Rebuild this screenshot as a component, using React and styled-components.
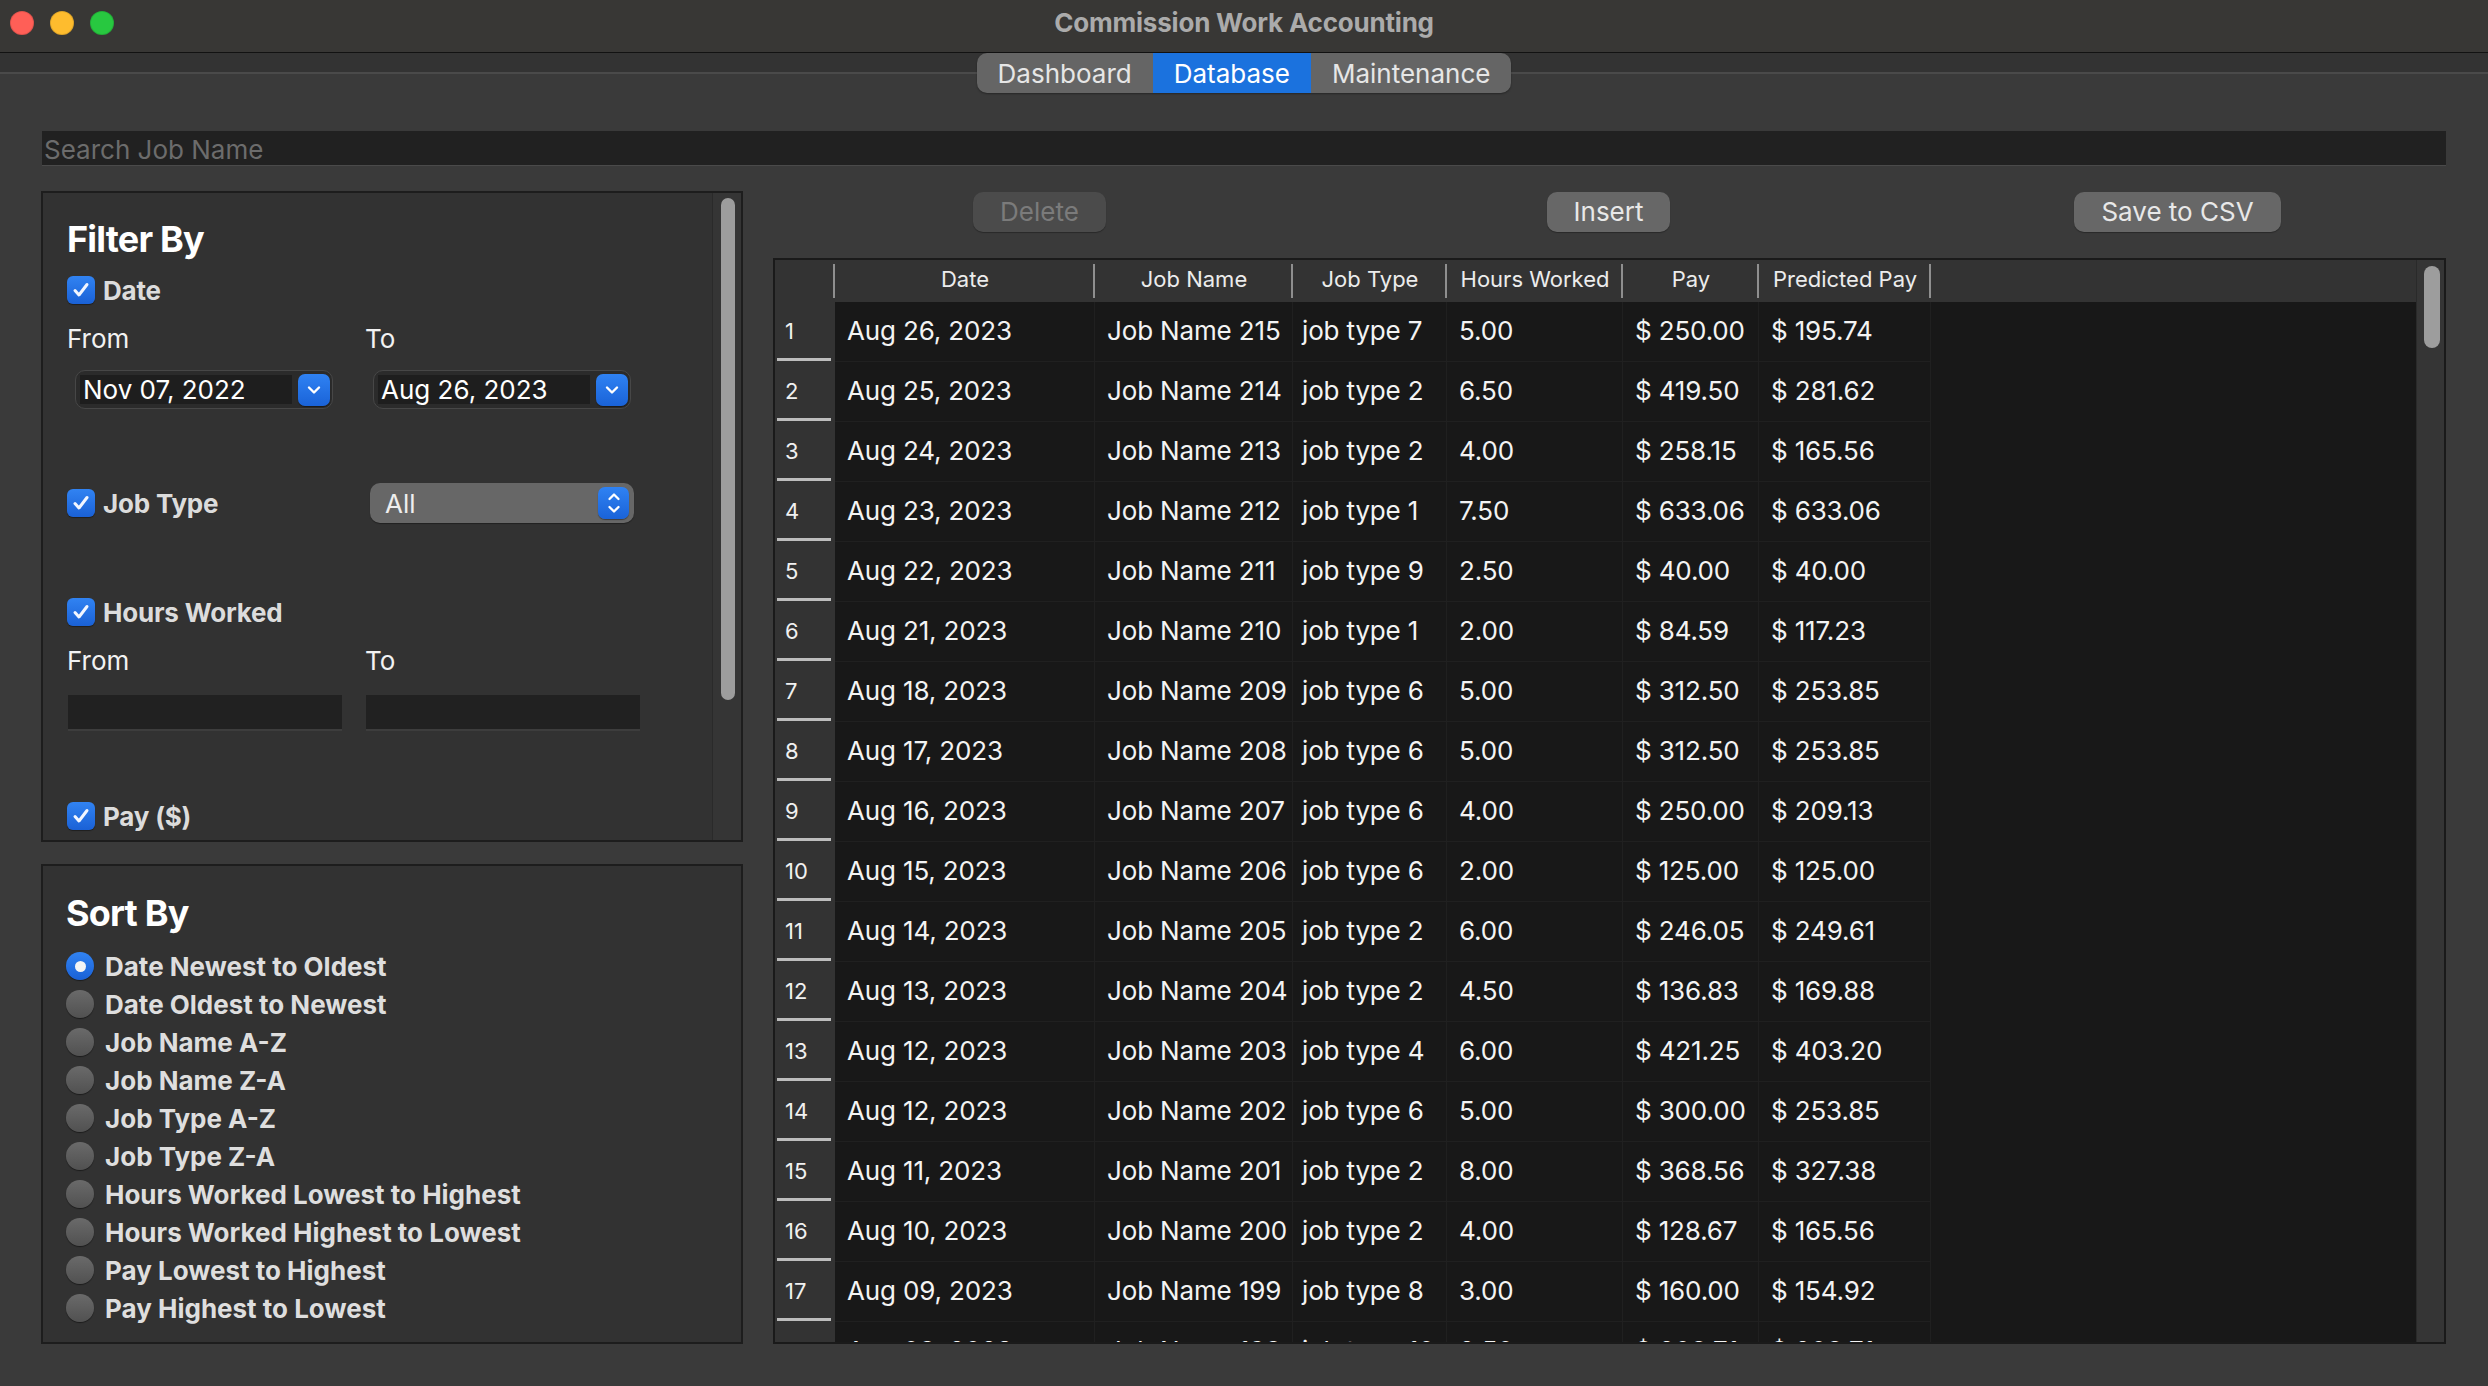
import React from "react";
import styled, { createGlobalStyle, css } from "styled-components";

const GlobalStyle = createGlobalStyle`
  html, body { margin: 0; padding: 0; background: #3a3a3a; }
  body { font-family: Inter, "Liberation Sans", sans-serif; -webkit-font-smoothing: antialiased; }
  * { box-sizing: border-box; }
`;

const Window = styled.div`
  width: 2488px;
  height: 1386px;
  display: flex;
  flex-direction: column;
  background: #3a3a3a;
  overflow: hidden;
`;

const TitleBar = styled.header`
  height: 53px;
  flex: none;
  display: grid;
  grid-template-columns: 1fr auto 1fr;
  align-items: start;
  background: #383735;
  border-bottom: 1px solid #121212;
`;

const Lights = styled.div`
  display: flex;
  gap: 16px;
  padding: 11px 0 0 10px;
`;

const Light = styled.span`
  width: 24px;
  height: 24px;
  border-radius: 50%;
  background: ${(p) => p.$color};
  box-shadow: inset 0 0 0 1px rgba(0, 0, 0, 0.12);
`;

const Title = styled.h1`
  margin: 0;
  padding-top: 10px;
  font-size: 26px;
  line-height: 26px;
  font-weight: 700;
  color: #ababab;
  letter-spacing: -0.2px;
`;

const TabStrip = styled.nav`
  height: 40px;
  flex: none;
  display: flex;
  justify-content: center;
  background: linear-gradient(
    #333333 0 19px,
    #4a4a4a 19px 21px,
    #3a3a3a 21px
  );
`;

const Segmented = styled.div`
  display: flex;
  height: 40px;
  border-radius: 10px;
  overflow: hidden;
  background: #656565;
  box-shadow: 0 1px 2px rgba(0, 0, 0, 0.35);
`;

const Segment = styled.div`
  padding: 0 21px;
  font-size: 26px;
  line-height: 41px;
  color: #e6e6e6;
  ${(p) =>
    p.$active &&
    css`
      background: #1b72de;
      color: #ffffff;
    `}
`;

const Content = styled.main`
  flex: 1;
  min-height: 0;
  display: flex;
  flex-direction: column;
  padding: 38px 42px 42px 41px;
`;

const SearchField = styled.input`
  height: 35px;
  flex: none;
  margin-left: 1px;
  border: none;
  border-bottom: 1px solid #4a4a4a;
  background: #212121;
  color: #eee;
  font-family: inherit;
  font-size: 26px;
  padding: 3px 2px 0;
  outline: none;
  &::placeholder {
    color: #6c6c6c;
  }
`;

const Main = styled.div`
  flex: 1;
  min-height: 0;
  margin-top: 25px;
  display: grid;
  grid-template-columns: 702px 1fr;
  gap: 30px;
`;

const LeftColumn = styled.div`
  display: flex;
  flex-direction: column;
  gap: 22px;
  min-height: 0;
`;

const Panel = styled.section`
  background: #323232;
  border: 2px solid #1d1d1d;
  display: flex;
  min-height: 0;
`;

const FilterPanel = styled(Panel)`
  height: 651px;
  flex: none;
`;

const SortPanel = styled(Panel)`
  flex: 1;
  flex-direction: column;
  padding: 28px 0 0 23px;
`;

const FilterBody = styled.div`
  flex: 1;
  overflow: hidden;
  padding: 27px 0 0 24px;
`;

const Heading = styled.h2`
  margin: 0;
  font-size: 36px;
  line-height: 38px;
  font-weight: 700;
  letter-spacing: -0.8px;
  color: #ffffff;
`;

const CheckRow = styled.label`
  display: flex;
  align-items: center;
  gap: 8px;
  height: 28px;
  margin-top: ${(p) => p.$mt || 0}px;
  font-size: 26px;
  font-weight: 650;
  color: #dcdcdc;
  letter-spacing: -0.2px;
`;

const CheckBox = styled.span`
  width: 28px;
  height: 28px;
  border-radius: 6px;
  background: linear-gradient(#3183f2, #1a61d6);
  box-shadow: 0 1px 1px rgba(0, 0, 0, 0.4);
  display: flex;
  align-items: center;
  justify-content: center;
`;

const TwoCol = styled.div`
  display: grid;
  grid-template-columns: 298px 298px;
  align-items: center;
  margin-top: ${(p) => p.$mt || 0}px;
`;

const FieldLabel = styled.span`
  font-size: 26px;
  line-height: 26px;
  color: #f2f2f2;
`;

const DatePicker = styled.div`
  margin-left: 8px;
  width: 258px;
  height: 39px;
  display: flex;
  align-items: center;
  gap: 6px;
  padding: 0 2px 0 4px;
  background: #2b2b2b;
  border: 1px solid #474747;
  border-radius: 10px;
`;

const DateText = styled.span`
  flex: 1;
  height: 29px;
  background: #1e1e1e;
  font-size: 26px;
  line-height: 29px;
  color: #ffffff;
  padding-left: 3px;
`;

const BlueStep = styled.span`
  width: ${(p) => p.$w || 32}px;
  height: 32px;
  flex: none;
  border-radius: 7px;
  background: linear-gradient(#2f82f3, #1a63d8);
  box-shadow: 0 1px 1px rgba(0, 0, 0, 0.4);
  display: flex;
  align-items: center;
  justify-content: center;
`;

const Popup = styled.div`
  margin-left: 5px;
  width: 264px;
  height: 40px;
  display: flex;
  align-items: center;
  justify-content: space-between;
  padding: 0 5px 0 15px;
  background: #676767;
  border-radius: 10px;
  box-shadow: 0 1px 1px rgba(0, 0, 0, 0.35);
  font-size: 26px;
  color: #eeeeee;
`;

const NumField = styled.div`
  margin-left: 1px;
  width: 274px;
  height: 36px;
  background: #212121;
  border-bottom: 2px solid #3d3d3d;
`;

const ScrollTrack = styled.div`
  width: ${(p) => p.$w}px;
  flex: none;
  background: #353535;
  border-left: 1px solid #2a2a2a;
  padding: ${(p) => p.$top}px 0 0 ${(p) => p.$left}px;
`;

const Thumb = styled.div`
  width: ${(p) => p.$w}px;
  height: ${(p) => p.$h}px;
  border-radius: ${(p) => p.$w / 2}px;
  background: #9d9d9d;
`;

const RadioList = styled.div`
  margin-top: 15px;
  display: flex;
  flex-direction: column;
`;

const RadioRow = styled.label`
  height: 38px;
  display: flex;
  align-items: center;
  gap: 11px;
  font-size: 26px;
  font-weight: 700;
  color: #dedede;
  letter-spacing: 0;
`;

const Radio = styled.span`
  width: 28px;
  height: 28px;
  border-radius: 50%;
  flex: none;
  display: flex;
  align-items: center;
  justify-content: center;
  box-shadow: 0 1px 1px rgba(0, 0, 0, 0.45);
  background: ${(p) =>
    p.$on
      ? "linear-gradient(#3183f2, #1a61d6)"
      : "linear-gradient(#6a6a6a, #515151)"};
  &::after {
    content: "";
    display: ${(p) => (p.$on ? "block" : "none")};
    width: 11px;
    height: 11px;
    border-radius: 50%;
    background: #f4f4f4;
  }
`;

const RightColumn = styled.div`
  display: flex;
  flex-direction: column;
  min-height: 0;
  min-width: 0;
`;

const ButtonRow = styled.div`
  height: 40px;
  flex: none;
  margin: 1px -16px 0 -18px;
  display: grid;
  grid-template-columns: repeat(3, 1fr);
  justify-items: center;
`;

const Button = styled.button`
  height: 40px;
  padding: 0 27px;
  border: none;
  border-radius: 10px;
  font-family: inherit;
  font-size: 26px;
  line-height: 38px;
  background: ${(p) => (p.disabled ? "#4b4b4b" : "#676767")};
  color: ${(p) => (p.disabled ? "#7b7b7b" : "#e8e8e8")};
  box-shadow: 0 1px 1px rgba(0, 0, 0, 0.3);
`;

const TableBox = styled.div`
  flex: 1;
  min-height: 0;
  margin-top: 26px;
  display: flex;
  border: 2px solid #1a1a1a;
  background: #181818;
`;

const TableMain = styled.div`
  flex: 1;
  min-width: 0;
  display: flex;
  flex-direction: column;
  overflow: hidden;
`;

const GRID = "60px 260px 198px 154px 176px 136px 172px 1fr";

const HeaderRow = styled.div`
  flex: none;
  height: 42px;
  display: grid;
  grid-template-columns: ${GRID};
  background: #333333;
`;

const HeaderCell = styled.div`
  text-align: center;
  font-size: 22px;
  line-height: 39px;
  color: #ececec;
  white-space: nowrap;
  background: ${(p) =>
    p.$sep
      ? "linear-gradient(#8f8f8f, #8f8f8f) no-repeat right center / 2px 34px"
      : "none"};
`;

const Body = styled.div`
  flex: 1;
  min-height: 0;
  overflow: hidden;
`;

const Row = styled.div`
  height: 60px;
  display: grid;
  grid-template-columns: ${GRID};
`;

const RowNum = styled.div`
  background: #333333
    linear-gradient(#bdbdbd, #bdbdbd) no-repeat left 2px bottom 1px / 54px 3px;
  font-size: 22px;
  line-height: 58px;
  padding-left: 10px;
  color: #f0f0f0;
`;

const Cell = styled.div`
  font-size: 26px;
  line-height: 57px;
  padding-left: ${(p) => p.$pad}px;
  color: #f3f3f3;
  letter-spacing: -0.15px;
  white-space: nowrap;
  overflow: hidden;
  border-right: 1px solid #202020;
  border-bottom: 1px solid #202020;
`;

const Filler = styled.div``;

const Check = () => (
  <CheckBox>
    <svg width="20" height="20" viewBox="0 0 20 20">
      <path
        d="M4 10.5 L8 15 L16 4.5"
        fill="none"
        stroke="#f2f6ff"
        strokeWidth="3"
        strokeLinecap="round"
        strokeLinejoin="round"
      />
    </svg>
  </CheckBox>
);

const ChevronDown = () => (
  <svg width="16" height="12" viewBox="0 0 16 12">
    <polyline
      points="3,3.5 8,8.5 13,3.5"
      fill="none"
      stroke="#fff"
      strokeWidth="2.4"
      strokeLinecap="round"
      strokeLinejoin="round"
    />
  </svg>
);

const UpDown = () => (
  <svg width="16" height="26" viewBox="0 0 16 26">
    <polyline
      points="3.5,9 8,4.5 12.5,9"
      fill="none"
      stroke="#fff"
      strokeWidth="2.3"
      strokeLinecap="round"
      strokeLinejoin="round"
    />
    <polyline
      points="3.5,17 8,21.5 12.5,17"
      fill="none"
      stroke="#fff"
      strokeWidth="2.3"
      strokeLinecap="round"
      strokeLinejoin="round"
    />
  </svg>
);

const columns = [
  { title: "Date", pad: 12 },
  { title: "Job Name", pad: 12 },
  { title: "Job Type", pad: 9 },
  { title: "Hours Worked", pad: 12 },
  { title: "Pay", pad: 12 },
  { title: "Predicted Pay", pad: 12 },
];

const rows = [
  ["Aug 26, 2023", "Job Name 215", "job type 7", "5.00", "$ 250.00", "$ 195.74"],
  ["Aug 25, 2023", "Job Name 214", "job type 2", "6.50", "$ 419.50", "$ 281.62"],
  ["Aug 24, 2023", "Job Name 213", "job type 2", "4.00", "$ 258.15", "$ 165.56"],
  ["Aug 23, 2023", "Job Name 212", "job type 1", "7.50", "$ 633.06", "$ 633.06"],
  ["Aug 22, 2023", "Job Name 211", "job type 9", "2.50", "$ 40.00", "$ 40.00"],
  ["Aug 21, 2023", "Job Name 210", "job type 1", "2.00", "$ 84.59", "$ 117.23"],
  ["Aug 18, 2023", "Job Name 209", "job type 6", "5.00", "$ 312.50", "$ 253.85"],
  ["Aug 17, 2023", "Job Name 208", "job type 6", "5.00", "$ 312.50", "$ 253.85"],
  ["Aug 16, 2023", "Job Name 207", "job type 6", "4.00", "$ 250.00", "$ 209.13"],
  ["Aug 15, 2023", "Job Name 206", "job type 6", "2.00", "$ 125.00", "$ 125.00"],
  ["Aug 14, 2023", "Job Name 205", "job type 2", "6.00", "$ 246.05", "$ 249.61"],
  ["Aug 13, 2023", "Job Name 204", "job type 2", "4.50", "$ 136.83", "$ 169.88"],
  ["Aug 12, 2023", "Job Name 203", "job type 4", "6.00", "$ 421.25", "$ 403.20"],
  ["Aug 12, 2023", "Job Name 202", "job type 6", "5.00", "$ 300.00", "$ 253.85"],
  ["Aug 11, 2023", "Job Name 201", "job type 2", "8.00", "$ 368.56", "$ 327.38"],
  ["Aug 10, 2023", "Job Name 200", "job type 2", "4.00", "$ 128.67", "$ 165.56"],
  ["Aug 09, 2023", "Job Name 199", "job type 8", "3.00", "$ 160.00", "$ 154.92"],
  ["Aug 08, 2023", "Job Name 198", "job type 10", "2.50", "$ 208.71", "$ 208.71"],
];

const sortOptions = [
  "Date Newest to Oldest",
  "Date Oldest to Newest",
  "Job Name A-Z",
  "Job Name Z-A",
  "Job Type A-Z",
  "Job Type Z-A",
  "Hours Worked Lowest to Highest",
  "Hours Worked Highest to Lowest",
  "Pay Lowest to Highest",
  "Pay Highest to Lowest",
];

export default function App() {
  return (
    <>
      <GlobalStyle />
      <Window>
        <TitleBar>
          <Lights>
            <Light $color="#ff5f57" />
            <Light $color="#febc2e" />
            <Light $color="#28c840" />
          </Lights>
          <Title>Commission Work Accounting</Title>
          <div />
        </TitleBar>
        <TabStrip>
          <Segmented>
            <Segment>Dashboard</Segment>
            <Segment $active>Database</Segment>
            <Segment>Maintenance</Segment>
          </Segmented>
        </TabStrip>
        <Content>
          <SearchField placeholder="Search Job Name" />
          <Main>
            <LeftColumn>
              <FilterPanel>
                <FilterBody>
                  <Heading>Filter By</Heading>
                  <CheckRow $mt={18}>
                    <Check />
                    Date
                  </CheckRow>
                  <TwoCol $mt={22}>
                    <FieldLabel>From</FieldLabel>
                    <FieldLabel>To</FieldLabel>
                  </TwoCol>
                  <TwoCol $mt={18}>
                    <DatePicker>
                      <DateText>Nov 07, 2022</DateText>
                      <BlueStep>
                        <ChevronDown />
                      </BlueStep>
                    </DatePicker>
                    <DatePicker>
                      <DateText>Aug 26, 2023</DateText>
                      <BlueStep>
                        <ChevronDown />
                      </BlueStep>
                    </DatePicker>
                  </TwoCol>
                  <TwoCol $mt={74}>
                    <CheckRow>
                      <Check />
                      Job Type
                    </CheckRow>
                    <Popup>
                      All
                      <BlueStep $w={31}>
                        <UpDown />
                      </BlueStep>
                    </Popup>
                  </TwoCol>
                  <CheckRow $mt={75}>
                    <Check />
                    Hours Worked
                  </CheckRow>
                  <TwoCol $mt={22}>
                    <FieldLabel>From</FieldLabel>
                    <FieldLabel>To</FieldLabel>
                  </TwoCol>
                  <TwoCol $mt={21}>
                    <NumField />
                    <NumField />
                  </TwoCol>
                  <CheckRow $mt={71}>
                    <Check />
                    Pay ($)
                  </CheckRow>
                </FilterBody>
                <ScrollTrack $w={29} $top={5} $left={8}>
                  <Thumb $w={14} $h={502} />
                </ScrollTrack>
              </FilterPanel>
              <SortPanel>
                <Heading>Sort By</Heading>
                <RadioList>
                  {sortOptions.map((o, i) => (
                    <RadioRow key={o}>
                      <Radio $on={i === 0} />
                      {o}
                    </RadioRow>
                  ))}
                </RadioList>
              </SortPanel>
            </LeftColumn>
            <RightColumn>
              <ButtonRow>
                <Button disabled>Delete</Button>
                <Button>Insert</Button>
                <Button>Save to CSV</Button>
              </ButtonRow>
              <TableBox>
                <TableMain>
                  <HeaderRow>
                    <HeaderCell $sep />
                    {columns.map((c) => (
                      <HeaderCell key={c.title} $sep>
                        {c.title}
                      </HeaderCell>
                    ))}
                    <HeaderCell />
                  </HeaderRow>
                  <Body>
                    {rows.map((r, i) => (
                      <Row key={i}>
                        <RowNum>{i + 1}</RowNum>
                        {r.map((v, j) => (
                          <Cell key={j} $pad={columns[j].pad}>
                            {v}
                          </Cell>
                        ))}
                        <Filler />
                      </Row>
                    ))}
                  </Body>
                </TableMain>
                <ScrollTrack $w={28} $top={6} $left={7}>
                  <Thumb $w={16} $h={82} />
                </ScrollTrack>
              </TableBox>
            </RightColumn>
          </Main>
        </Content>
      </Window>
    </>
  );
}
